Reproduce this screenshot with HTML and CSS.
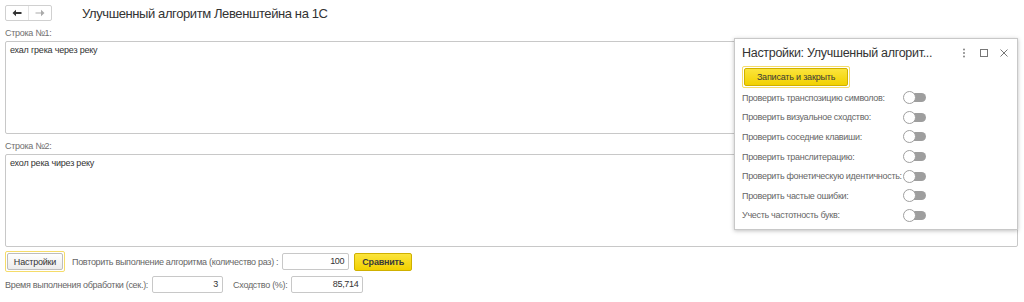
FILE: index.html
```html
<!DOCTYPE html>
<html lang="ru">
<head>
    <meta charset="UTF-8">
    <title>Улучшенный алгоритм Левенштейна на 1С</title>
    <link rel="stylesheet" href="styles.css">
</head>
<body>

<div class="page">
    <!-- шапка формы -->
    <div class="header">
        <div class="nav">
            <span class="nav-btn">
                <svg width="10" height="8" viewBox="0 0 10 8"><path d="M0.5 4 L4 0.8 L4 3.1 L9.5 3.1 L9.5 4.9 L4 4.9 L4 7.2 Z" fill="#333"/></svg>
            </span>
            <span class="nav-btn off">
                <svg width="10" height="8" viewBox="0 0 10 8"><path d="M9.5 4 L6 0.8 L6 3.4 L0.5 3.4 L0.5 4.6 L6 4.6 L6 7.2 Z" fill="#aaa"/></svg>
            </span>
        </div>
        <h1>Улучшенный алгоритм Левенштейна на 1С</h1>
    </div>

    <div class="field-label">Строка №1:</div>
    <div class="text-box">ехал грека через реку</div>

    <div class="field-label">Строка №2:</div>
    <div class="text-box">ехол река чирез реку</div>

    <div class="row">
        <div class="focus"><button class="btn w-settings">Настройки</button></div>
        <span class="label">Повторить выполнение алгоритма (количество раз) :</span>
        <div class="input w-count">100</div>
        <button class="btn yellow w-compare">Сравнить</button>
    </div>
    <div class="row">
        <span class="label first">Время выполнения обработки (сек.):</span>
        <div class="input w-time">3</div>
        <span class="label">Сходство (%):</span>
        <div class="input w-sim">85,714</div>
    </div>
</div>

<!-- окно настроек -->
<div class="dialog">
    <div class="dialog-head">
        <span class="dialog-title">Настройки: Улучшенный алгорит...</span>
        <svg width="12" height="12" viewBox="0 0 12 12"><circle cx="6" cy="2.5" r="0.9" fill="#777"/><circle cx="6" cy="6" r="0.9" fill="#777"/><circle cx="6" cy="9.5" r="0.9" fill="#777"/></svg>
        <svg width="12" height="12" viewBox="0 0 12 12"><rect x="2.5" y="2.5" width="7" height="7" fill="none" stroke="#777" stroke-width="1"/></svg>
        <svg width="12" height="12" viewBox="0 0 12 12"><path d="M2.5 2.5 L9.5 9.5 M9.5 2.5 L2.5 9.5" stroke="#777" stroke-width="1"/></svg>
    </div>
    <div class="focus dialog-save"><button class="btn yellow w-save">Записать и закрыть</button></div>
    <div class="option"><span>Проверить транспозицию символов:</span><i class="toggle"></i></div>
    <div class="option"><span>Проверить визуальное сходство:</span><i class="toggle"></i></div>
    <div class="option"><span>Проверить соседние клавиши:</span><i class="toggle"></i></div>
    <div class="option"><span>Проверить транслитерацию:</span><i class="toggle"></i></div>
    <div class="option"><span>Проверить фонетическую идентичность:</span><i class="toggle"></i></div>
    <div class="option"><span>Проверить частые ошибки:</span><i class="toggle"></i></div>
    <div class="option"><span>Учесть частотность букв:</span><i class="toggle"></i></div>
</div>

</body>
</html>
```

FILE: styles.css
```css
body {
    font-family: "Liberation Sans", Arial, sans-serif;
    background-color: #ffffff;
    color: #333333;
    margin: 0;
    padding: 0;
    font-size: 9px;
    letter-spacing: -0.3px;
}
.page {
    padding: 5px 6px 0 5px;
}
.header {
    display: flex;
    align-items: center;
    height: 16px;
}
.nav {
    display: flex;
    width: 47px;
    height: 16px;
    border: 1px solid #d0d0d0;
    border-radius: 2px;
    box-sizing: border-box;
}
.nav-btn {
    flex: 1;
    display: flex;
    align-items: center;
    justify-content: center;
}
.nav-btn.off {
    border-left: 1px solid #e4e4e4;
}
.header h1 {
    margin: 0 0 0 30px;
    font-size: 13px;
    letter-spacing: -0.4px;
    font-weight: normal;
    color: #333;
}
.field-label {
    color: #707070;
    margin: 6px 0 2px;
    line-height: 12px;
}
.text-box {
    height: 93px;
    border: 1px solid #c8c8c8;
    border-radius: 2px;
    padding: 3px 4px;
    box-sizing: border-box;
    font-size: 9px;
    letter-spacing: -0.2px;
    color: #333;
}
.row {
    display: flex;
    align-items: center;
    margin-top: 5px;
    height: 19px;
}
.row + .row {
    margin-top: 4px;
}
.focus {
    border: 1px solid #f5dc6a;
    border-radius: 2px;
    padding: 1px;
}
.btn {
    font-family: inherit;
    font-size: 9px;
    letter-spacing: -0.2px;
    height: 17px;
    padding: 0;
    border: 1px solid #bdbdbd;
    border-radius: 2px;
    background: linear-gradient(#ffffff, #ececec);
    color: #333;
    box-sizing: border-box;
}
.btn.yellow {
    background: linear-gradient(#fbe43c, #f2d100);
    border-color: #cfb000;
    color: #3a3a3a;
    height: 18px;
}
.w-settings { width: 56px; }
.w-compare { width: 58px; font-weight: bold; }
.w-save { width: 104px; }
.label {
    color: #666;
    margin: 0 4px 0 7px;
}
.label.first {
    margin-left: 0;
}
.input {
    height: 17px;
    line-height: 15px;
    border: 1px solid #c8c8c8;
    border-radius: 2px;
    box-sizing: border-box;
    text-align: right;
    padding-right: 4px;
    color: #333;
    margin-right: 5px;
}
.w-count { width: 67px; }
.w-time { width: 71px; margin-right: 3px; }
.w-sim { width: 72px; }
.dialog {
    position: absolute;
    left: 734px;
    top: 38px;
    width: 284px;
    height: 192px;
    background: #fff;
    border: 1px solid #c8c8c8;
    box-shadow: 0 1px 4px rgba(0, 0, 0, 0.25);
    box-sizing: border-box;
    padding: 0 7px;
}
.dialog-head {
    display: flex;
    align-items: center;
    height: 27px;
    gap: 8px;
}
.dialog-title {
    font-size: 12.5px;
    letter-spacing: -0.3px;
    color: #333;
    flex: 1;
    white-space: nowrap;
}
.dialog-save {
    display: flex;
    width: fit-content;
    margin: 0;
}
.option {
    display: flex;
    align-items: center;
    height: 19.6px;
    color: #666;
}
.option span {
    width: 162px;
    white-space: nowrap;
}
.toggle {
    position: relative;
    width: 22px;
    height: 9px;
    background: #9e9e9e;
    border-radius: 5px;
}
.toggle::before {
    content: "";
    position: absolute;
    left: -1px;
    top: -2px;
    width: 11px;
    height: 11px;
    border-radius: 50%;
    background: #fff;
    border: 1px solid #a0a0a0;
}
```
